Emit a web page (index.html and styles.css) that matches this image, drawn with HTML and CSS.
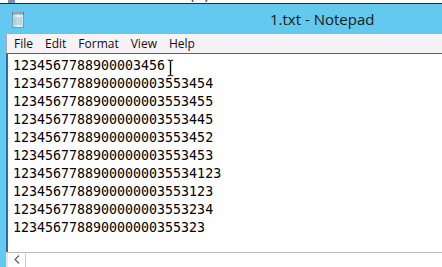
FILE: index.html
```html
<!DOCTYPE html>
<html lang="en">
<head>
    <meta charset="UTF-8">
    <title>1.txt - Notepad</title>
    <link rel="stylesheet" href="styles.css">
</head>
<body>

    <!-- Explorer address bar, mostly hidden behind the window -->
    <div class="behind">
        <div class="crumbs">
            <span class="crumb-icon"></span>
            <span class="crumb-sep">&#9654;</span>
            <span>This PC</span>
            <span class="crumb-sep">&#9654;</span>
            <span>Local Disk (C:)</span>
        </div>
    </div>

    <div class="window">
        <div class="titlebar">
            <svg class="app-icon" width="14" height="17" viewBox="0 0 14 17">
                <defs>
                    <linearGradient id="pad" x1="0" y1="0" x2="1" y2="0">
                        <stop offset="0" stop-color="#9fd3e6"/>
                        <stop offset="0.5" stop-color="#eaf6fb"/>
                        <stop offset="1" stop-color="#c9e4ee"/>
                    </linearGradient>
                </defs>
                <rect x="1.5" y="2.5" width="11" height="14" fill="url(#pad)" stroke="#7c9aa8"/>
                <rect x="1" y="1" width="12" height="2.5" fill="#5c7f95"/>
                <path d="M3 1v3M5 1v3M7 1v3M9 1v3M11 1v3" stroke="#d8e4ea" stroke-width="0.8"/>
                <path d="M3 7h8M3 9h8M3 11h8M3 13h8" stroke="#8fb8c8" stroke-width="0.8"/>
            </svg>
            <span class="title">1.txt - Notepad</span>
        </div>

        <div class="client">
            <div class="menubar">
                <span class="menu-item">File</span>
                <span class="menu-item">Edit</span>
                <span class="menu-item">Format</span>
                <span class="menu-item">View</span>
                <span class="menu-item">Help</span>
            </div>

            <div class="editor">
<pre class="text">1234567788900003456
1234567788900000003553454
1234567788900000003553455
1234567788900000003553445
1234567788900000003553452
1234567788900000003553453
12345677889000000035534123
1234567788900000003553123
1234567788900000003553234
123456778890000000355323</pre>
                <!-- mouse pointer over the text -->
                <svg class="ibeam" width="7" height="18" viewBox="0 0 7 18">
                    <path d="M0.5 0.5h2.5v0.5h1v-0.5h2.5v1.5h-2v14h2v1.5h-2.5v-0.5h-1v0.5h-2.5v-1.5h2v-14h-2z" fill="#000" stroke="#fff" stroke-width="0.6"/>
                </svg>
            </div>

            <div class="hscroll">
                <span class="arrow">
                    <svg width="6" height="9" viewBox="0 0 6 9">
                        <path d="M5 0.5L1 4.5L5 8.5" fill="none" stroke="#606060" stroke-width="1.2"/>
                    </svg>
                </span>
                <span class="track"></span>
            </div>
        </div>
    </div>

</body>
</html>
```

FILE: styles.css
```css
/* Page */
body {
    margin: 0;
    width: 442px;
    height: 267px;
    overflow: hidden;
    background: #fafafa;
    font-family: "Open Sans", "Noto Sans", sans-serif;
    color: #1e1e1e;
}

/* Address bar peeking above the window */
.behind {
    height: 3px;
    overflow: hidden;
}

.crumbs {
    display: flex;
    align-items: center;
    gap: 10px;
    height: 14px;
    margin-top: -11px;
    padding-left: 8px;
    font-size: 12px;
    line-height: 14px;
    color: #111;
}

.crumb-icon {
    width: 7px;
    height: 14px;
    background: #7f93a6;
    margin-right: 8px;
}

.crumb-sep {
    font-size: 8px;
    margin: 0 4px;
}

/* Window frame */
.window {
    border-top: 1px solid #2a2a2a;
    background: #63c9ef;
    padding-left: 6px;
}

.titlebar {
    display: flex;
    align-items: center;
    height: 29px;
}

.app-icon {
    margin-left: 5px;
    margin-top: 2px;
}

.title {
    margin-left: 245px;
    margin-top: 1px;
    font-size: 15px;
    color: #1a1a1a;
}

/* Client area */
.client {
    background: #fff;
}

.menubar {
    display: flex;
    height: 19px;
    align-items: center;
    background: #f6f2f6;
    border-top: 1px solid #86b9d6;
    border-bottom: 1px solid #2e6da4;
    border-left: 1px solid #a9adb8;
    padding-left: 1px;
    font-size: 12px;
}

.menu-item {
    padding: 0 6px;
    color: #111;
}

.editor {
    position: relative;
    height: 198px;
    border-left: 2px solid #2c6aa0;
}

.text {
    margin: 0;
    padding: 3px 0 0 5px;
    font-family: "DejaVu Sans Mono", "Liberation Mono", monospace;
    font-size: 13.3px;
    line-height: 18px;
    color: #000;
}

.ibeam {
    position: absolute;
    left: 159px;
    top: 5px;
}

/* Horizontal scrollbar */
.hscroll {
    display: flex;
    height: 14px;
    border-top: 1px solid #bdbdbd;
    border-left: 2px solid #e6e6e6;
    background: #fff;
}

.arrow {
    display: flex;
    align-items: center;
    justify-content: center;
    width: 17px;
    border-right: 1px solid #cfcfcf;
    padding-bottom: 1px;
}

.track {
    flex: 1;
}
```
